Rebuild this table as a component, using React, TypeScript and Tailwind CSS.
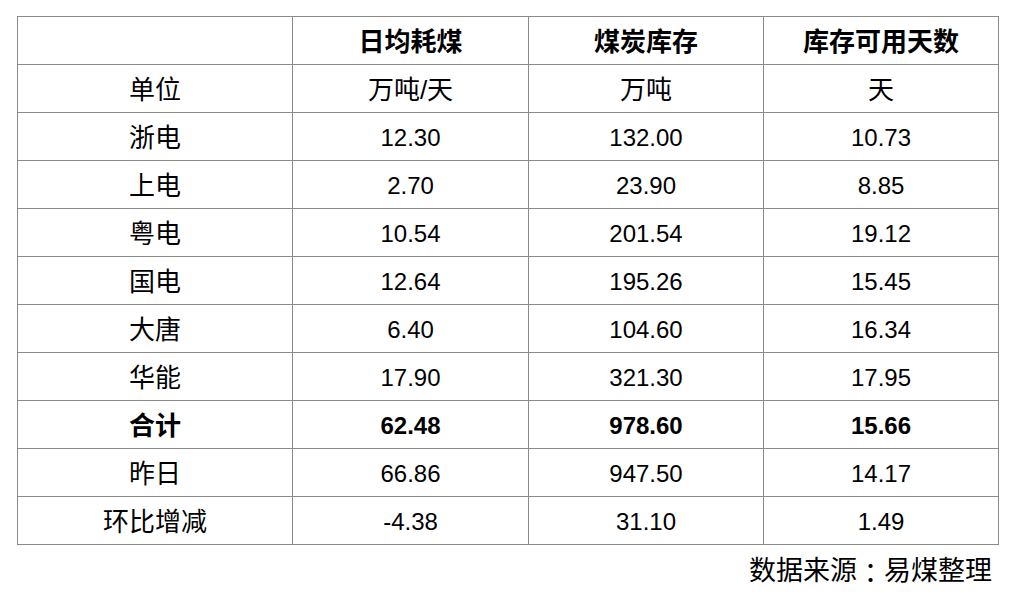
import React from "react";

type Row = {
  name: string;
  a: string;
  b: string;
  c: string;
  bold?: boolean;
};

const rows: Row[] = [
  { name: "单位", a: "万吨/天", b: "万吨", c: "天" },
  { name: "浙电", a: "12.30", b: "132.00", c: "10.73" },
  { name: "上电", a: "2.70", b: "23.90", c: "8.85" },
  { name: "粤电", a: "10.54", b: "201.54", c: "19.12" },
  { name: "国电", a: "12.64", b: "195.26", c: "15.45" },
  { name: "大唐", a: "6.40", b: "104.60", c: "16.34" },
  { name: "华能", a: "17.90", b: "321.30", c: "17.95" },
  { name: "合计", a: "62.48", b: "978.60", c: "15.66", bold: true },
  { name: "昨日", a: "66.86", b: "947.50", c: "14.17" },
  { name: "环比增减", a: "-4.38", b: "31.10", c: "1.49" },
];

const cell = "border border-[#8a8a8a] h-[48px] p-0 pt-[3px] text-center align-middle";

// chinese text runs a bit bigger than the digits in the original
const isCn = (s: string) => /[\u4e00-\u9fff]/.test(s);

const Txt = ({ s }: { s: string }) => (
  <span className={isCn(s) ? "text-[26px]" : "text-[24px]"}>{s}</span>
);

export default function App() {
  return (
    <div
      className="w-[1012px] h-[597px] bg-white pt-[16px] pl-[17px] text-black"
      style={{ fontFamily: '"Liberation Sans", "Noto Sans CJK SC", sans-serif' }}
    >
      <table className="border-collapse table-fixed w-[981px] leading-none">
        <colgroup>
          <col className="w-[275px]" />
          <col className="w-[236px]" />
          <col className="w-[235px]" />
          <col className="w-[235px]" />
        </colgroup>
        <thead>
          <tr className="font-bold">
            <th className={cell}></th>
            <th className={cell}><Txt s="日均耗煤" /></th>
            <th className={cell}><Txt s="煤炭库存" /></th>
            <th className={cell}><Txt s="库存可用天数" /></th>
          </tr>
        </thead>
        <tbody>
          {rows.map((r) => (
            <tr key={r.name} className={r.bold ? "font-bold" : "font-normal"}>
              <td className={cell}><Txt s={r.name} /></td>
              <td className={cell}><Txt s={r.a} /></td>
              <td className={cell}><Txt s={r.b} /></td>
              <td className={cell}><Txt s={r.c} /></td>
            </tr>
          ))}
        </tbody>
      </table>
      <div className="flex justify-end pr-[20px] pt-[13px] text-[27px] leading-none">
        数据来源
        <span className="font-['Noto_Sans_CJK_TC',sans-serif]">：</span>
        易煤整理
      </div>
    </div>
  );
}
